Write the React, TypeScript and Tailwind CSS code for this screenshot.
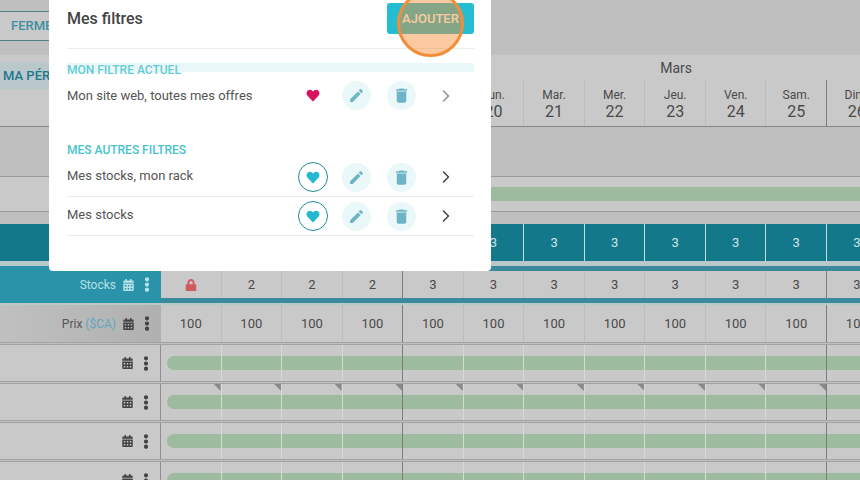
import { FaCalendarAlt, FaHeart, FaLock, FaEllipsisV } from "react-icons/fa";
import { MdEdit, MdDelete } from "react-icons/md";
import { ChevronRight } from "lucide-react";

const COLS = Array.from({ length: 12 }, (_, i) => i);
const DAYS = ["Mer.", "Jeu.", "Ven.", "Sam.", "Dim.", "Lun.", "Mar.", "Mer.", "Jeu.", "Ven.", "Sam.", "Dim."];
const STOCK = [null, 2, 2, 2, 3, 3, 3, 3, 3, 3, 3, 3];

const divider = (i: number, light = "border-[#bcbcbc]") =>
  `border-r ${i === 3 || i === 10 ? "border-[#7d7d7d]" : light}`;

function Grid({ children }: { children: React.ReactNode }) {
  return <div className="grid grid-cols-[repeat(12,60.55px)] h-full">{children}</div>;
}

function RowTools({ tone = "text-[#444]" }: { tone?: string }) {
  return (
    <div className={`flex items-center ${tone}`}>
      <FaCalendarAlt className="w-[11px] h-[12px] ml-[7px]" />
      <FaEllipsisV className="w-[12px] h-[15px] ml-[7px] mr-[8px]" />
    </div>
  );
}

function BarRow({ corners }: { corners?: boolean }) {
  return (
    <div className="flex h-[38px] bg-[#c9c9c9] border-y border-[#a3a3a3] mb-[1px]">
      <div className="w-[161px] shrink-0 flex items-center justify-end border-r border-[#8f8f8f]">
        <RowTools />
      </div>
      <Grid>
        {COLS.map((i) => (
          <div key={i} className={`relative flex items-center ${divider(i, "border-[#d3dcd3]")}`}>
            <div className={`h-[14px] bg-[#9cbb9f] w-full ${i === 0 ? "ml-[6px] rounded-l-full" : ""}`} />
            {corners && (
              <div className="absolute top-0 right-0 w-[7px] h-[7px] bg-[#8a8a8a] [clip-path:polygon(0_0,100%_0,100%_100%)]" />
            )}
          </div>
        ))}
      </Grid>
    </div>
  );
}

function IconButton({ children }: { children: React.ReactNode }) {
  return (
    <div className="w-[29px] h-[29px] rounded-full bg-[#ebf8f9] flex items-center justify-center text-[#6fb3c6]">
      {children}
    </div>
  );
}

function FilterRow({ label, active, border = true }: { label: string; active?: boolean; border?: boolean }) {
  return (
    <div className={`flex items-center h-[39px] ${border ? "border-b border-[#eaeaea]" : ""}`}>
      <span className={`text-[13px] text-[#555] w-[231px] ${active ? "" : "mb-[2px]"}`}>{label}</span>
      <div className={`w-[30px] h-[30px] rounded-full flex items-center justify-center ${active ? "" : "border border-[#1f8a9c]"}`}>
        <FaHeart className={`w-[14px] h-[13px] ${active ? "text-[#d5165f]" : "text-[#25b9cf]"}`} />
      </div>
      <div className="ml-[14px]">
        <IconButton>
          <MdEdit className="w-[17px] h-[17px]" />
        </IconButton>
      </div>
      <div className="ml-[16px]">
        <IconButton>
          <MdDelete className="w-[19px] h-[19px]" />
        </IconButton>
      </div>
      <ChevronRight
        className={`w-[20px] h-[20px] ml-[20px] ${active ? "text-[#8f8f8f]" : "text-[#444]"}`}
        strokeWidth={1.8}
      />
    </div>
  );
}

export default function App() {
  return (
    <div className="relative w-[860px] h-[480px] overflow-hidden bg-[#bfbfbf] font-['Roboto',sans-serif]">
      {/* Top tool bar */}
      <div className="h-[55px] pt-[11px]">
        <div className="w-[120px] h-[30px] border-y border-[#4f7f88] bg-[#c9c9c9] pl-[11px] flex items-center text-[13px] font-medium text-[#3f8fa0]">
          FERMER
        </div>
      </div>

      {/* Calendar header */}
      <div className="flex h-[72px] bg-[#c9c9c9] border-b border-[#868686]">
        <div className="w-[161px] shrink-0 pt-[7px]">
          <div className="w-[120px] h-[27px] bg-[#bac8cb] pl-[3px] flex items-center text-[13px] font-medium text-[#21788b]">
            MA PÉRIODE
          </div>
        </div>
        <div className="flex-1 min-w-0 flex flex-col overflow-hidden">
          <div className="h-[25px] shrink-0 w-[699px] flex items-center justify-end pr-[168px] pt-[2px] text-[14px] text-[#4a4a4a]">
            Mars
          </div>
          <div className="h-[46px]">
            <Grid>
              {COLS.map((i) => (
                <div key={i} className={`flex flex-col items-center pt-[8px] text-[#4a4a4a] ${divider(i)}`}>
                  <span className="text-[12px] leading-[14px]">{DAYS[i]}</span>
                  <span className="text-[16px] leading-[20px]">{15 + i}</span>
                </div>
              ))}
            </Grid>
          </div>
        </div>
      </div>

      {/* Empty band */}
      <div className="h-[49px]" />

      {/* Accommodation row */}
      <div className="flex h-[36px] bg-[#c9c9c9] border-y border-[#9a9a9a] items-center">
        <div className="w-[161px] shrink-0" />
        <div className="flex-1 h-[14px] bg-[#9cbb9f]" />
      </div>

      <div className="h-[12px]" />

      {/* Availability */}
      <div className="flex h-[37px] bg-[#14788b]">
        <div className="w-[161px] shrink-0" />
        <Grid>
          {COLS.map((i) => (
            <div key={i} className="flex items-center justify-center text-[13px] text-[#cfe4e8] border-r border-[#c4dde2]">
              3
            </div>
          ))}
        </Grid>
      </div>

      {/* Stocks */}
      <div className="h-[5px] bg-[#b9c8ca]" />
      <div className="flex h-[37px]">
        <div className="w-[161px] shrink-0 bg-[#2a93a9] flex items-center justify-end text-[12px] text-[#b5e0e8]">
          <span>Stocks</span>
          <RowTools tone="text-[#b5e3ea]" />
        </div>
        <div className="flex-1 min-w-0 flex flex-col overflow-hidden">
          <div className="h-[5px] bg-[#3a8a9b]" />
          <div className="h-[27px] bg-[#c9c9c9]">
            <Grid>
              {COLS.map((i) => (
                <div key={i} className={`flex items-center justify-center text-[13px] text-[#4a4a4a] ${divider(i)}`}>
                  {STOCK[i] === null ? <FaLock className="w-[12px] h-[12px] text-[#cf5b5e]" /> : STOCK[i]}
                </div>
              ))}
            </Grid>
          </div>
          <div className="h-[5px] bg-[#3a8a9b]" />
        </div>
      </div>
      <div className="h-[2px] bg-[#b9c8ca]" />

      {/* Prices */}
      <div className="flex h-[38px] bg-[#c9c9c9] border-b border-[#a3a3a3] mb-[1px]">
        <div className="w-[161px] shrink-0 bg-gradient-to-r from-[#c0c0c0] to-[#b0b0b0] flex items-center justify-end text-[12px] text-[#555]">
          <span>
            Prix <span className="text-[#5aa9bb]">($CA)</span>
          </span>
          <RowTools />
        </div>
        <Grid>
          {COLS.map((i) => (
            <div key={i} className={`flex items-center justify-center text-[13px] text-[#4a4a4a] ${divider(i)}`}>
              100
            </div>
          ))}
        </Grid>
      </div>

      <BarRow />
      <BarRow corners />
      <BarRow />
      <BarRow />

      {/* Filters dialog */}
      <div className="absolute left-[49px] top-0 w-[442px] h-[271px] bg-white rounded-b-[4px] pl-[18px] pr-[17px]">
        <div className="h-[49px] border-b border-[#ececec] flex justify-between pt-[3px]">
          <span className="text-[16px] font-medium text-[#444] leading-[32px]">Mes filtres</span>
          <div className="w-[87px] h-[31px] rounded-[3px] bg-[#25bdd1] flex items-center justify-center text-[13px] font-medium text-white">
            AJOUTER
          </div>
        </div>
        <div className="relative mt-[14px] h-[9px] bg-[#eaf7f8] rounded-[2px]">
          <span className="absolute left-0 top-0 text-[12px] leading-[14px] font-medium text-[#62cdd6]">
            MON FILTRE ACTUEL
          </span>
        </div>
        <div className="mt-[4px]">
          <FilterRow label="Mon site web, toutes mes offres" active border={false} />
        </div>
        <div className="mt-[28px] text-[12px] leading-[14px] font-medium text-[#48c3cf]">MES AUTRES FILTRES</div>
        <div className="mt-[1px]">
          <FilterRow label="Mes stocks, mon rack" />
          <FilterRow label="Mes stocks" />
        </div>
      </div>

      {/* Click highlight */}
      <div className="absolute left-[397px] top-[-10px] w-[67px] h-[67px] rounded-full border-[3px] border-[#f28e3a] bg-[#f98a2c]/45" />
    </div>
  );
}
